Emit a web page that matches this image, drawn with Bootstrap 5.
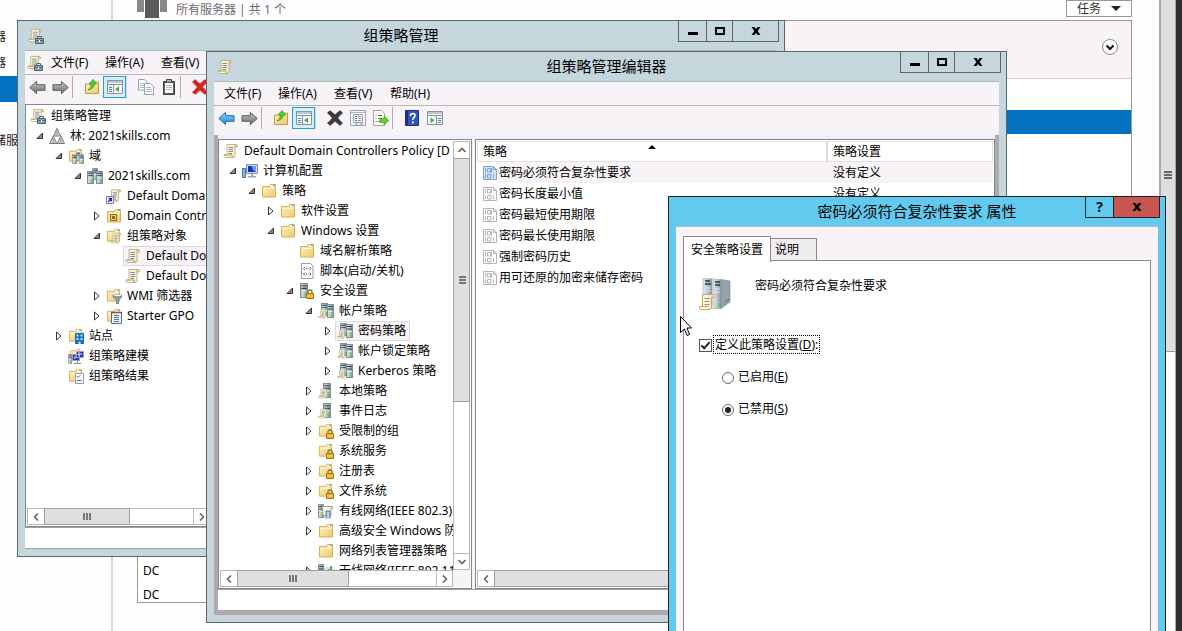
<!DOCTYPE html>
<html lang="zh-CN">
<head>
<meta charset="utf-8">
<meta name="viewport" content="width=device-width, initial-scale=1">
<title>组策略管理编辑器</title>
<link rel="stylesheet" href="https://cdn.jsdelivr.net/npm/bootstrap@5.3.0/dist/css/bootstrap.min.css">
<style>
:root{--edge:#5b6669;--chrome:#c5d6dd;--face:#f7f3f7;--pane:#828790;}
body{font:12px/20px "Noto Sans","Noto Sans CJK SC",sans-serif;color:#000;background:#fffcff}
svg{display:block;flex:none}
button{font:inherit;color:inherit;padding:0;border:0;background:none}
ul{list-style:none;margin:0;padding:0}
.ic{width:16px;height:16px}

/* server manager behind the windows */
.side{width:113px;border-right:2px solid #d8d5d8;padding-top:24px}
.side a{display:block;height:26px;line-height:26px;color:#222;text-decoration:none;margin-left:-6px;padding:0}
.side li.on{background:#0072bf;height:26px}
.side li.last{margin-top:26px}
.board{padding:0 27px 28px 24px}
.board-top{height:20px}
.crumb{gap:9px;color:#6b6b6b}
.tasks{width:66px;height:17px;border:1px solid #999;background:#fff;line-height:15px;color:#333}
.sheet{border:1px solid #999;background:#fff}
.sheet-head{height:58px;background:var(--face);border-bottom:1px solid #ccc;padding-right:13px}
.sheet-head button{margin-top:-6px}
.sheet-on{margin-top:31px;height:24px;background:#0072bf}
.dc-rows{height:43px;line-height:24px;padding-left:5px}
.page-bar{width:17px;border:1px solid #aaa;border-width:0 1px 0 2px;background:#fff}
.page-thumb{height:352px;background:#dfdfdf;border-bottom:1px solid #999}
.strip{width:6px;background:#303030}

/* windows */
.win{border:1px solid var(--edge);background:var(--chrome);position:absolute}
.win-gpm{left:17px;top:20px;width:768px;height:537px}
.win-edit{left:206px;top:51px;width:801px;height:572px}
.win-prop{left:668px;top:196px;width:498px;bottom:-12px;border-color:#222;background:#62caef}
.caption{display:grid;grid-template-columns:1fr auto 1fr;height:29px;flex:none}
.caption h1{font-size:15px;line-height:29px;margin:0;font-weight:400}
.caption .ic{margin-left:10px}
.cap-btns{margin-right:5px}
.cap-btns button{width:29px;height:21px;border:1px solid var(--edge);border-top:0;margin-left:-1px;display:flex;align-items:center;justify-content:center}
.cap-btns .b-max{width:27px}
.cap-btns .b-close{width:47px}
.cap-btns .b-help{font-size:14px;font-weight:700}
.win-prop .cap-btns button{border-color:#222}
.win-prop .b-close{background:#c75650}
.client{margin:0 7px 7px;border-top:1px solid #b0b8c0;background:var(--face);min-height:0}
.menus{height:24px;border-bottom:1px solid #b8b8bc;padding-left:2px}
.menus button{padding:0 8px;line-height:22px;min-width:56px;text-align:left}
.menus button:first-of-type{min-width:54px}
.tools{height:29px;padding:1px 0 0 1px}
.tools button{width:23px;height:22px;display:flex;align-items:center;justify-content:center;border:1px solid transparent}
.tools button.on{border-color:#26a0da;background:#d6ecf8}
.vr-line{width:1px;height:22px;background:#b0acb0;margin-right:7px;flex:none}
.vr-soft{background:#dcd8dc}
.frame{background:#aeaaad;padding:0 4px 5px;min-height:0}
.lilac{height:4px;background:#eeeefc}
.gap-bar{background:var(--face);gap:3px;min-height:0}
.pane{border:1px solid var(--pane);background:#fff;padding:1px;min-width:0;overflow:hidden}
.pane-gpm{width:187px}
.pane-edit{width:254px}
.status{height:22px;background:#fff;border:1px solid #a0a0a0;border-width:1px 0;flex:none}
.frame .status{height:21px;border-bottom:0}

/* trees */
.tree{padding-left:1px;white-space:nowrap}
.tree ul{padding-left:19px}
.tree>li>ul{padding-left:7px}
.tw{width:12px;height:20px;flex:none;display:flex;align-items:center;padding-left:1px}
.node{display:inline-flex;align-items:center;height:20px;gap:5px;padding:0 3px 0 1px;border:1px solid transparent;line-height:18px}
.node.on{background:var(--face);border-color:#dcd8dc}

/* scroll bars */
.sb{flex:none;height:17px;display:flex;border:1px solid #b8b8b8;background:#fff}
.sb button,.sbv button{width:16px;display:flex;align-items:center;justify-content:center;flex:none}
.thumb{background:#dfdfdf;border:1px solid #a0a0a0;margin:-1px 0;display:flex;align-items:center;justify-content:center}
.sb .back{border-left:1px solid #b8b8b8;margin-left:auto}
.sbv{flex:none;width:17px;display:flex;flex-direction:column;border:1px solid #b8b8b8;background:#fff}
.sbv button{width:15px;height:16px}
.sbv .thumb{margin:0 -1px;height:244px}
.sbv .back{border-top:1px solid #b8b8b8;margin-top:auto}
.t-gpm{width:86px}.t-edit{width:112px}
.corner{width:17px;background:var(--face)}

/* policy list */
.grid{width:100%;table-layout:fixed;border-collapse:separate;border-spacing:0;line-height:21px}
.grid th{height:21px;line-height:19px;font-weight:400;padding:0 0 0 5px;border:1px solid #e3e0e3;position:relative}
.grid th+th{border-left-color:#d8d5d8}
.grid td{height:21px;padding:0 0 0 6px}
.c-name{width:350px}
.grid .lbl{padding-left:2px}
.grid tr.on .lbl,.grid tr.on td+td{background:var(--face)}
.reg-ic{width:14px;height:14px;fill:#fff;stroke:#b5b2b8}
.on .reg-ic{fill:#cfe4fa;stroke:#7aa5d4}
.sorter{position:absolute;left:50%;top:3px;margin-left:-4px}

/* properties dialog */
.prop-body{padding:9px 7px 0}
.prop-tabs{height:24px;z-index:1}
.prop-tabs button{border:1px solid #8c8a8e;border-bottom:0;padding:0 7px;height:24px;line-height:22px}
.prop-tabs button.active{background:#fff;height:26px;width:88px}
.prop-tabs .tab-b{background:#f0edf1;width:46px;height:22px;margin-top:2px;border-left:0;padding:0 4px;text-align:left}
.prop-page{border:1px solid #8c8a8e;background:#fff;padding:17px 15px}
.prop-name{gap:24px}
.prop-name span{line-height:16px}
.def-row{margin-top:26px;gap:2px}
.opt-row{margin-left:23px;gap:4px;height:20px}
.opts{margin-top:14px;gap:12px}
.box{appearance:none;width:13px;height:13px;border:1px solid #555;background:#fff;margin:2px 0 0;flex:none;display:grid;place-items:center}
.box:checked::before{content:"";width:9px;height:5px;border:solid #222;border-width:0 0 2px 2px;transform:rotate(-48deg);margin-top:-3px}
.dot{appearance:none;width:12px;height:12px;border:1px solid #666;border-radius:50%;background:#fff;margin:1px 0 0;flex:none;display:grid;place-items:center}
.dot:checked::before{content:"";width:6px;height:6px;border-radius:50%;background:#222}
.focus-lbl{outline:1px dotted #000;outline-offset:0;line-height:17px;padding:0 1px}
.pointer{position:absolute;left:680px;top:316px}
</style>
</head>
<body>
<svg width="0" height="0" class="position-absolute" aria-hidden="true">
<defs>
<linearGradient id="gf" x2="1" y2="1"><stop stop-color="#fff0bd"/><stop offset="1" stop-color="#eecb74"/></linearGradient>
<linearGradient id="gs" x2="1"><stop stop-color="#e8eef2"/><stop offset=".5" stop-color="#b7c6d0"/><stop offset="1" stop-color="#8496a2"/></linearGradient>
<linearGradient id="gg" y2="1" x2="0"><stop stop-color="#c8c8c8"/><stop offset="1" stop-color="#6a6a6a"/></linearGradient>
<linearGradient id="gb" y2="1" x2="0"><stop stop-color="#8fdcff"/><stop offset="1" stop-color="#1583d0"/></linearGradient>
<linearGradient id="gp" x2="1" y2="0"><stop stop-color="#fffdf0"/><stop offset="1" stop-color="#f3e7bd"/></linearGradient>
</defs>
<symbol id="scroll" viewBox="0 0 16 16"><path d="M4 1.500h9.500q1.500.3 1 2.500h-2.500V13q-.3 1.500-2 1.500H2Q.8 14 1.200 12H4z" fill="url(#gp)" stroke="#c0b48c"/><path d="M1.200 12H9q-.3 2 1.500 2.500M12 4q-.3-2 1.500-2.500" fill="none" stroke="#ad9c6c"/><path d="M5.500 4.500h4.500M5.500 6.500h4.500M5.500 8.500h4.500M5.500 10.500h3.500" stroke="#8b8b94"/></symbol>
<symbol id="scrollbox" viewBox="0 0 16 16"><use href="#scroll" width="15" height="15"/><path d="M7.500 10.500h8v5h-8z" fill="#8ba2b5" stroke="#4f6475"/><path d="M9.500 10.500v-2h4v2M7.500 12.500h8" fill="none" stroke="#4f6475"/><path d="M11 12h1v2h-1z" fill="#fff"/></symbol>
<symbol id="folder" viewBox="0 0 16 16"><path d="M1.500 3.500h7l1-2h5v12.500h-13z" fill="url(#gf)" stroke="#d6ae55"/><path d="M10 2h4v2h-4z" fill="#fff"/><path d="M12 2.500h2" stroke="#4a9ad8"/><path d="M2.500 5.500h11" stroke="#fff5cf"/></symbol>
<symbol id="rack" viewBox="0 0 6 14" preserveAspectRatio="none"><path d="M.5.500h5v13h-5z" fill="url(#gs)" stroke="#7f8d97"/><path d="M1 2.500h4M1 5h4" stroke="#2f3b43"/><path d="M1 7.500h4" stroke="#e2e9ee"/><path d="M3.500 10.500h1.500v2h-1.500z" fill="#3fe01e"/></symbol>
<symbol id="servers" viewBox="0 0 16 16"><use href="#rack" x="5" y="0" width="6" height="12"/><use href="#rack" x="0" y="3" width="7" height="13"/><use href="#rack" x="9" y="3" width="7" height="13"/></symbol>
<symbol id="forest" viewBox="0 0 16 16"><g fill="#d8d8d8" stroke="#777" stroke-linejoin="round"><path d="M8 .5 11.500 8h-7zM4.200 8.200 7.800 15.500H.5zM11.800 8.200l3.700 7.300H8.200z"/></g><path d="M8 .5V8M4.200 8.200v7M11.800 8.200v7" stroke="#999"/></symbol>
<symbol id="f-servers" viewBox="0 0 16 16"><use href="#folder" width="15" height="15"/><use href="#servers" x="4" y="4" width="12" height="12"/></symbol>
<symbol id="link" viewBox="0 0 16 16"><use href="#scroll" x="2" width="14" height="15"/><path d="M.5 8.500h7v7h-7z" fill="#fff" stroke="#7a7a9a"/><path d="M2 14l3-3M2.500 10.500h3v3" stroke="#1d2fa5" fill="none" stroke-width="1.300"/></symbol>
<symbol id="ou" viewBox="0 0 16 16"><use href="#folder" width="16" height="16"/><path d="M4.500 6.500h6v6h-6z" fill="#e8cf7a" stroke="#8d6a1a"/><path d="M6 8h3v3H6z" fill="#8d6a1a"/></symbol>
<symbol id="f-scroll" viewBox="0 0 16 16"><use href="#folder" width="15" height="15"/><use href="#scroll" x="4" y="4" width="12" height="12"/></symbol>
<symbol id="f-filter" viewBox="0 0 16 16"><use href="#folder" width="15" height="15"/><path d="M7 7h9v2l-3.500 3V16h-2v-4L7 9z" fill="#7ea0ba" stroke="#587488" stroke-width=".6"/><path d="M8 7.500h7" stroke="#fff"/></symbol>
<symbol id="f-starter" viewBox="0 0 16 16"><use href="#folder" width="15" height="15"/><path d="M5.500 4.500h10v11h-10z" fill="#e9f1f8" stroke="#4d6f90"/><path d="M5 4.500h11" stroke="#9b4c36" stroke-width="1.500"/><path d="M8 7.500h5M8 9.500h5M8 11.500h5M8 13.500h5" stroke="#56779a"/></symbol>
<symbol id="f-site" viewBox="0 0 16 16"><use href="#folder" width="15" height="15"/><path d="M7 5h9v11H7z" fill="#1673b8"/><path d="M8.500 6.500h2v2h-2zM12.500 6.500h2v2h-2zM8.500 10h2v2h-2zM12.500 10h2v2h-2zM10.500 13.500h2V16h-2z" fill="#a9e2fb"/></symbol>
<symbol id="f-model" viewBox="0 0 16 16"><use href="#folder" x="1" width="12" height="12"/><use href="#rack" y="6" width="4" height="10"/><path d="M4.500 6.500h7v6h-7zM8.500 3.500h7v6h-7z" fill="#2636b8" stroke="#9ba5bb"/><path d="M11 4v4M7 8v3M13 5v2" stroke="#fff"/><path d="M6 15.500h7M9.500 13v2" stroke="#888"/></symbol>
<symbol id="f-result" viewBox="0 0 16 16"><use href="#folder" width="15" height="15"/><path d="M7.500 5.500h8v10h-8z" fill="#fff" stroke="#99a"/><path d="m9 8 1.200 1.500L12.500 7M9 12.500h5" fill="none" stroke="#2b83c6"/></symbol>
<symbol id="pc" viewBox="0 0 16 16"><path d="M4.500 1.500h11v9h-11z" fill="#d5dbe4" stroke="#8791a1"/><path d="M6 3h8v6H6z" fill="#1830c8"/><path d="M10 3h4v6q-4-1-4-6z" fill="#6f9cf2"/><path d="M9 11h2v2h3v1.500H6V13h3z" fill="#9aa3ad"/><path d="M.5 5.500h3v9h-3z" fill="#86b4da" stroke="#4a7aa3"/></symbol>
<symbol id="script" viewBox="0 0 16 16"><path d="M2.500.5h9l2.500 2.500v12.500H2.500z" fill="#fff" stroke="#9a9aa2"/><path d="M6 4 4.500 5.500 6 7M10.500 4 12 5.500 10.500 7M6 9.500 4.500 11 6 12.500M10.500 9.500 12 11l-1.500 1.500" fill="none" stroke="#555"/><path d="M7 5.500h2.500M7 11h2.500" stroke="#555" stroke-dasharray="1 1"/></symbol>
<symbol id="lock" viewBox="0 0 8 10"><path d="M2 5V3q0-2 2-2t2 2v2" fill="none" stroke="#8c7030" stroke-width="1.300"/><path d="M.5 4.500h7v5h-7z" fill="#e9ac28" stroke="#a87716"/><path d="M1 7h6" stroke="#ffd76a"/></symbol>
<symbol id="s-lock" viewBox="0 0 16 16"><use href="#rack" x="1" y="0" width="8" height="15"/><use href="#lock" x="7" y="6" width="8" height="10"/></symbol>
<symbol id="f-lock" viewBox="0 0 16 16"><use href="#folder" width="15" height="15"/><use href="#lock" x="8" y="6" width="8" height="10"/></symbol>
<symbol id="s-pol" viewBox="0 0 16 16"><use href="#rack" x="3" y="0" width="7" height="13"/><use href="#rack" x="9" y="1" width="7" height="14"/><use href="#scroll" y="6" width="10" height="10"/></symbol>
<symbol id="s-one" viewBox="0 0 16 16"><use href="#rack" x="5" y="0" width="8" height="15"/><use href="#scroll" y="5" width="11" height="11"/></symbol>
<symbol id="net" viewBox="0 0 16 16"><use href="#rack" x="0" y="1" width="6" height="14"/><path d="M4.500 3.500h10v2h-1.500v7H5z" fill="#fffbe8" stroke="#a89c74"/><path d="M8 15.500V8h4v7.500" fill="#b8cfe6" stroke="#4777a4"/></symbol>
<symbol id="wifi" viewBox="0 0 16 16"><use href="#rack" x="0" y="1" width="6" height="14"/><path d="M6 4h10v11H6z" fill="#dfe6d8"/><path d="M8 10V8M10.500 10V6M13 10V3" stroke="#2b9a35" stroke-width="1.500"/></symbol>
<symbol id="reg" viewBox="0 0 14 14"><path d="M.5.500h10l3 3v10H.500z"/><path d="M10.500.5v3h3M2.500 2v4.500M2.500 8.500V12M10.500 8.500V12" fill="none"/><path d="M4.500 2.500h3v3.500h-3zM8.500 2v4.500M4.500 8.500h3.500v3.500H4.500z" fill="none"/></symbol>
<symbol id="arrow" viewBox="0 0 18 16"><path d="M.8 8 8 1.500V5h9v6H8v3.500z" stroke-linejoin="round"/></symbol>
<symbol id="up" viewBox="0 0 16 16"><path d="M1.500 5h6l1-2h6v11.500h-13z" fill="url(#gf)" stroke="#c79b3d"/><path d="M4 11q3-1 3.500-6H5l4-4.500L12.500 5h-2q-.5 5-6.500 6z" fill="#4bd12e" stroke="#2d9819" stroke-width=".7"/></symbol>
<symbol id="panel" viewBox="0 0 16 16"><path d="M.5 1.500h15v13H.500z" fill="#f7f9fb" stroke="#8593a3"/><path d="M1 3h14M1 5.500h14" stroke="#8593a3"/><path d="M6.500 6v8" stroke="#8593a3"/><path d="M2 8.500h3M2 10.500h3M2 12.500h3" stroke="#4a83bd"/><path d="m12 7.500-4 2.700 4 2.800z" fill="#44a83a"/></symbol>
<symbol id="panel-r" viewBox="0 0 16 16"><path d="M.5 1.500h15v13H.500z" fill="#f7f9fb" stroke="#8593a3"/><path d="M1 3h14M1 5.500h14M9.500 6v8" stroke="#8593a3"/><path d="M11 8.500h3M11 10.500h3M11 12.500h3" stroke="#4a83bd"/><path d="m3.500 7.500 4 2.700-4 2.800z" fill="#44a83a"/></symbol>
<symbol id="copy" viewBox="0 0 16 16"><path d="M.5.500h6l2.500 2.500v8H.500z" fill="#fff" stroke="#98a2ad"/><path d="M6.500 4.500h6l3 3v8h-9z" fill="#fff" stroke="#98a2ad"/><path d="M2 4.500h4M2 6.500h4M2 8.500h4M8 8.500h5M8 10.500h6M8 12.500h6" stroke="#a9bccf"/></symbol>
<symbol id="clip" viewBox="0 0 16 16"><path d="M2.500 2.500h11v13h-11z" fill="#5e5e5e" stroke="#444"/><path d="M4 4h8v10H4z" fill="#fff"/><path d="M5.500.5h5v3h-5z" fill="#aaa" stroke="#444"/><path d="M5 6.500h6M5 8.500h6M5 10.500h6" stroke="#bbb"/></symbol>
<symbol id="cross" viewBox="0 0 16 16"><path d="M0 3 3 .3q2.500 2 5 4.200Q10.500 2 13 .3L16 3q-3 2-5 5 2.500 3 5 5l-3 2.700q-2.500-2-5-4.200-2.500 2.500-5 4.200L0 13q3-2 5-5-2.500-3-5-5z"/></symbol>
<symbol id="props" viewBox="0 0 16 16"><path d="M.5.500h15v15H.500z" fill="#f7fafc" stroke="#98a2ad"/><path d="M1 2.500h14" stroke="#a9b5c1"/><path d="M3.500 4.500h9v8h-9z" fill="#fff" stroke="#98a2ad"/><path d="M5 6.500h2M5 8.500h2M5 10.500h2" stroke="#2e7fc4"/><path d="M8 6.500h3M8 8.500h3M8 10.500h3M5 14h3M10 14h3" stroke="#8593a3"/></symbol>
<symbol id="export" viewBox="0 0 16 16"><path d="M.5.500h8l3 3v12H.500z" fill="#fffef2" stroke="#a9a58c"/><path d="M2.500 5.500h1M2.500 8.500h1M2.500 11.500h1M5 5.500h4M5 8.500h4M5 11.500h3" stroke="#6a6a6a"/><path d="M7 8.500h4V6l5 4.500-5 4.500v-2.500H7z" fill="#5ccc35" stroke="#3b9a1d" stroke-width=".6"/></symbol>
<symbol id="minus" viewBox="0 0 10 10"><path d="M0 6h10v3H0z"/></symbol>
<symbol id="square" viewBox="0 0 10 10"><path d="M1 2h8v6H1z" fill="none" stroke="#000" stroke-width="2"/></symbol>
<symbol id="xx" viewBox="0 0 10 10"><path d="M.5 1h3L5 3.300 6.500 1h3L6.600 5l2.900 4h-3L5 6.700 3.500 9h-3l2.900-4z"/></symbol>
<symbol id="open" viewBox="0 0 8 8"><path d="M6.500 1v5.500H1z" fill="#888" stroke="#333"/></symbol>
<symbol id="shut" viewBox="0 0 8 10"><path d="m1.500 1 4.500 4-4.500 4z" fill="#fff" stroke="#333"/></symbol>
<symbol id="chev" viewBox="0 0 8 8"><path d="M6 .5 2.500 4 6 7.500" fill="none" stroke="#666" stroke-width="1.600"/></symbol>
<symbol id="grip" viewBox="0 0 8 8"><path d="M0 0h2v7H0zM3 0h2v7H3zM6 0h2v7H6z" fill="#777"/></symbol>
</svg>

<div class="position-relative vh-100 overflow-hidden d-flex">
  <nav class="side flex-shrink-0 overflow-hidden" aria-label="服务器管理器">
    <ul>
      <li><a href="#">器</a></li>
      <li><a href="#">器</a></li>
      <li class="on"></li>
      <li class="last"><a href="#">储服</a></li>
    </ul>
  </nav>
  <main class="board flex-fill d-flex flex-column">
    <div class="board-top d-flex justify-content-between">
      <div class="d-flex crumb">
        <svg width="30" height="18"><path d="M0 0h7v12H0zM23 0h7v12h-7z" fill="#8a878a"/><path d="M8 0h14v18H8z" fill="#5c5a5c"/></svg>
        <span>所有服务器 | 共 1 个</span>
      </div>
      <button class="tasks d-flex align-items-center justify-content-evenly" type="button">任务<svg width="10" height="6"><path d="M0 0h10L5 5z" fill="#222"/></svg></button>
    </div>
    <div class="sheet flex-fill d-flex flex-column">
      <div class="sheet-head d-flex justify-content-end align-items-center">
        <button type="button" aria-label="展开"><svg width="16" height="16"><circle cx="8" cy="8" r="7.500" fill="#fff" stroke="#888"/><path d="m4.500 6.500 3.500 3.500 3.500-3.500" fill="none" stroke="#111" stroke-width="2"/></svg></button>
      </div>
      <div class="sheet-on"></div>
      <div class="dc-rows mt-auto overflow-hidden"><div>DC</div><div>DC</div></div>
    </div>
  </main>
  <div class="page-bar flex-shrink-0"><div class="page-thumb d-flex align-items-center justify-content-center"><svg width="8" height="9"><path d="M0 0h8v2H0zM0 3h8v2H0zM0 6h8v2H0z" fill="#666"/></svg></div></div>
  <div class="strip flex-shrink-0"></div>

  <!-- group policy management -->
  <section class="win win-gpm d-flex flex-column" aria-label="组策略管理">
    <header class="caption">
      <svg class="ic align-self-center"><use href="#scrollbox"/></svg>
      <h1>组策略管理</h1>
      <div class="cap-btns d-flex justify-content-end">
        <button type="button" aria-label="最小化"><svg width="10" height="10"><use href="#minus"/></svg></button>
        <button class="b-max" type="button" aria-label="最大化"><svg width="10" height="10"><use href="#square"/></svg></button>
        <button class="b-close" type="button" aria-label="关闭"><svg width="10" height="10"><use href="#xx"/></svg></button>
      </div>
    </header>
    <div class="client flex-fill d-flex flex-column">
      <div class="menus d-flex align-items-center flex-shrink-0">
        <svg class="ic"><use href="#scrollbox"/></svg>
        <button type="button">文件(F)</button><button type="button">操作(A)</button><button type="button">查看(V)</button>
      </div>
      <div class="tools d-flex flex-shrink-0">
        <button type="button" aria-label="后退"><svg width="17" height="15" fill="url(#gg)" stroke="#555"><use href="#arrow"/></svg></button>
        <button type="button" aria-label="前进"><svg width="17" height="15" fill="url(#gg)" stroke="#555"><use href="#arrow" transform="matrix(-1 0 0 1 17 0)"/></svg></button>
        <i class="vr-line"></i>
        <button type="button" aria-label="上移"><svg class="ic"><use href="#up"/></svg></button>
        <button class="on" type="button" aria-label="显示树"><svg class="ic"><use href="#panel"/></svg></button>
        <i class="vr-line vr-soft"></i>
        <button type="button" aria-label="复制"><svg class="ic"><use href="#copy"/></svg></button>
        <button type="button" aria-label="粘贴"><svg class="ic"><use href="#clip"/></svg></button>
        <i class="vr-line"></i>
        <button type="button" aria-label="删除"><svg class="ic" fill="#d8231f"><use href="#cross"/></svg></button>
      </div>
      <div class="gap-bar flex-fill d-flex">
        <div class="pane pane-gpm d-flex flex-column flex-shrink-0">
          <ul class="tree flex-fill overflow-hidden">
            <li><div class="d-flex"><span class="node"><svg class="ic"><use href="#scrollbox"/></svg>组策略管理</span></div>
              <ul>
                <li><div class="d-flex"><span class="tw"><svg width="8" height="8"><use href="#open"/></svg></span><span class="node"><svg class="ic"><use href="#forest"/></svg>林: 2021skills.com</span></div>
                  <ul>
                    <li><div class="d-flex"><span class="tw"><svg width="8" height="8"><use href="#open"/></svg></span><span class="node"><svg class="ic"><use href="#f-servers"/></svg>域</span></div>
                      <ul>
                        <li><div class="d-flex"><span class="tw"><svg width="8" height="8"><use href="#open"/></svg></span><span class="node"><svg class="ic"><use href="#servers"/></svg>2021skills.com</span></div>
                          <ul>
                            <li class="d-flex"><span class="tw"></span><span class="node"><svg class="ic"><use href="#link"/></svg>Default Domain</span></li>
                            <li class="d-flex"><span class="tw"><svg width="8" height="10"><use href="#shut"/></svg></span><span class="node"><svg class="ic"><use href="#ou"/></svg>Domain Controllers</span></li>
                            <li><div class="d-flex"><span class="tw"><svg width="8" height="8"><use href="#open"/></svg></span><span class="node"><svg class="ic"><use href="#f-scroll"/></svg>组策略对象</span></div>
                              <ul>
                                <li class="d-flex"><span class="tw"></span><span class="node on"><svg class="ic"><use href="#scroll"/></svg>Default Domain</span></li>
                                <li class="d-flex"><span class="tw"></span><span class="node"><svg class="ic"><use href="#scroll"/></svg>Default Domain</span></li>
                              </ul></li>
                            <li class="d-flex"><span class="tw"><svg width="8" height="10"><use href="#shut"/></svg></span><span class="node"><svg class="ic"><use href="#f-filter"/></svg>WMI 筛选器</span></li>
                            <li class="d-flex"><span class="tw"><svg width="8" height="10"><use href="#shut"/></svg></span><span class="node"><svg class="ic"><use href="#f-starter"/></svg>Starter GPO</span></li>
                          </ul></li>
                      </ul></li>
                    <li class="d-flex"><span class="tw"><svg width="8" height="10"><use href="#shut"/></svg></span><span class="node"><svg class="ic"><use href="#f-site"/></svg>站点</span></li>
                    <li class="d-flex"><span class="tw"></span><span class="node"><svg class="ic"><use href="#f-model"/></svg>组策略建模</span></li>
                    <li class="d-flex"><span class="tw"></span><span class="node"><svg class="ic"><use href="#f-result"/></svg>组策略结果</span></li>
                  </ul></li>
              </ul></li>
          </ul>
          <div class="sb">
            <button type="button" aria-label="向左"><svg width="8" height="8"><use href="#chev"/></svg></button>
            <div class="thumb t-gpm"><svg width="8" height="8"><use href="#grip"/></svg></div>
            <button class="back" type="button" aria-label="向右"><svg width="8" height="8"><use href="#chev" transform="matrix(-1 0 0 1 8 0)"/></svg></button>
          </div>
        </div>
        <div class="pane flex-fill"></div>
      </div>
      <div class="status"></div>
    </div>
  </section>

  <!-- policy editor -->
  <section class="win win-edit d-flex flex-column" aria-label="组策略管理编辑器">
    <header class="caption">
      <svg class="ic align-self-center"><use href="#scroll"/></svg>
      <h1>组策略管理编辑器</h1>
      <div class="cap-btns d-flex justify-content-end">
        <button type="button" aria-label="最小化"><svg width="10" height="10"><use href="#minus"/></svg></button>
        <button class="b-max" type="button" aria-label="最大化"><svg width="10" height="10"><use href="#square"/></svg></button>
        <button class="b-close" type="button" aria-label="关闭"><svg width="10" height="10"><use href="#xx"/></svg></button>
      </div>
    </header>
    <div class="client flex-fill d-flex flex-column">
      <div class="menus d-flex align-items-center flex-shrink-0">
        <button type="button">文件(F)</button><button type="button">操作(A)</button><button type="button">查看(V)</button><button type="button">帮助(H)</button>
      </div>
      <div class="tools d-flex flex-shrink-0">
        <button type="button" aria-label="后退"><svg width="17" height="15" fill="url(#gb)" stroke="#1668a8"><use href="#arrow"/></svg></button>
        <button type="button" aria-label="前进"><svg width="17" height="15" fill="url(#gg)" stroke="#555"><use href="#arrow" transform="matrix(-1 0 0 1 17 0)"/></svg></button>
        <i class="vr-line"></i>
        <button type="button" aria-label="上移"><svg class="ic"><use href="#up"/></svg></button>
        <button class="on" type="button" aria-label="显示树"><svg class="ic"><use href="#panel"/></svg></button>
        <i class="vr-line vr-soft"></i>
        <button type="button" aria-label="删除"><svg class="ic" fill="#3c3c3c"><use href="#cross"/></svg></button>
        <button type="button" aria-label="属性"><svg class="ic"><use href="#props"/></svg></button>
        <button type="button" aria-label="导出列表"><svg class="ic"><use href="#export"/></svg></button>
        <i class="vr-line"></i>
        <button type="button" aria-label="帮助"><svg width="14" height="16"><path d="M.5.500h13v15H.500z" fill="#2f55c4" stroke="#1c2f7c"/><path d="M1 1h2v14H1z" fill="#1c2f7c"/><path d="M5.500 6q0-2.500 2.300-2.500T10 5.700Q10 7 8.500 7.800 7.800 8.300 7.800 10M7.800 11.500v2" fill="none" stroke="#fff" stroke-width="1.600"/></svg></button>
        <button type="button" aria-label="操作窗格"><svg class="ic"><use href="#panel-r"/></svg></button>
      </div>
      <div class="frame flex-fill d-flex flex-column">
        <div class="lilac flex-shrink-0"></div>
        <div class="gap-bar flex-fill d-flex">
          <div class="pane pane-edit d-flex flex-column flex-shrink-0">
            <div class="d-flex flex-fill overflow-hidden">
              <ul class="tree flex-fill overflow-hidden">
                <li><div class="d-flex"><span class="node"><svg class="ic"><use href="#scroll"/></svg>Default Domain Controllers Policy [D</span></div>
                  <ul>
                    <li><div class="d-flex"><span class="tw"><svg width="8" height="8"><use href="#open"/></svg></span><span class="node"><svg class="ic"><use href="#pc"/></svg>计算机配置</span></div>
                      <ul>
                        <li><div class="d-flex"><span class="tw"><svg width="8" height="8"><use href="#open"/></svg></span><span class="node"><svg class="ic"><use href="#folder"/></svg>策略</span></div>
                          <ul>
                            <li class="d-flex"><span class="tw"><svg width="8" height="10"><use href="#shut"/></svg></span><span class="node"><svg class="ic"><use href="#folder"/></svg>软件设置</span></li>
                            <li><div class="d-flex"><span class="tw"><svg width="8" height="8"><use href="#open"/></svg></span><span class="node"><svg class="ic"><use href="#folder"/></svg>Windows 设置</span></div>
                              <ul>
                                <li class="d-flex"><span class="tw"></span><span class="node"><svg class="ic"><use href="#folder"/></svg>域名解析策略</span></li>
                                <li class="d-flex"><span class="tw"></span><span class="node"><svg class="ic"><use href="#script"/></svg>脚本(启动/关机)</span></li>
                                <li><div class="d-flex"><span class="tw"><svg width="8" height="8"><use href="#open"/></svg></span><span class="node"><svg class="ic"><use href="#s-lock"/></svg>安全设置</span></div>
                                  <ul>
                                    <li><div class="d-flex"><span class="tw"><svg width="8" height="8"><use href="#open"/></svg></span><span class="node"><svg class="ic"><use href="#s-pol"/></svg>帐户策略</span></div>
                                      <ul>
                                        <li class="d-flex"><span class="tw"><svg width="8" height="10"><use href="#shut"/></svg></span><span class="node on"><svg class="ic"><use href="#s-pol"/></svg>密码策略</span></li>
                                        <li class="d-flex"><span class="tw"><svg width="8" height="10"><use href="#shut"/></svg></span><span class="node"><svg class="ic"><use href="#s-pol"/></svg>帐户锁定策略</span></li>
                                        <li class="d-flex"><span class="tw"><svg width="8" height="10"><use href="#shut"/></svg></span><span class="node"><svg class="ic"><use href="#s-pol"/></svg>Kerberos 策略</span></li>
                                      </ul></li>
                                    <li class="d-flex"><span class="tw"><svg width="8" height="10"><use href="#shut"/></svg></span><span class="node"><svg class="ic"><use href="#s-one"/></svg>本地策略</span></li>
                                    <li class="d-flex"><span class="tw"><svg width="8" height="10"><use href="#shut"/></svg></span><span class="node"><svg class="ic"><use href="#s-one"/></svg>事件日志</span></li>
                                    <li class="d-flex"><span class="tw"><svg width="8" height="10"><use href="#shut"/></svg></span><span class="node"><svg class="ic"><use href="#f-lock"/></svg>受限制的组</span></li>
                                    <li class="d-flex"><span class="tw"></span><span class="node"><svg class="ic"><use href="#f-lock"/></svg>系统服务</span></li>
                                    <li class="d-flex"><span class="tw"><svg width="8" height="10"><use href="#shut"/></svg></span><span class="node"><svg class="ic"><use href="#f-lock"/></svg>注册表</span></li>
                                    <li class="d-flex"><span class="tw"><svg width="8" height="10"><use href="#shut"/></svg></span><span class="node"><svg class="ic"><use href="#f-lock"/></svg>文件系统</span></li>
                                    <li class="d-flex"><span class="tw"><svg width="8" height="10"><use href="#shut"/></svg></span><span class="node"><svg class="ic"><use href="#net"/></svg>有线网络(IEEE 802.3)</span></li>
                                    <li class="d-flex"><span class="tw"><svg width="8" height="10"><use href="#shut"/></svg></span><span class="node"><svg class="ic"><use href="#folder"/></svg>高级安全 Windows 防</span></li>
                                    <li class="d-flex"><span class="tw"></span><span class="node"><svg class="ic"><use href="#folder"/></svg>网络列表管理器策略</span></li>
                                    <li class="d-flex"><span class="tw"><svg width="8" height="10"><use href="#shut"/></svg></span><span class="node"><svg class="ic"><use href="#wifi"/></svg>无线网络(IEEE 802.11</span></li>
                                  </ul></li>
                              </ul></li>
                          </ul></li>
                      </ul></li>
                  </ul></li>
              </ul>
              <div class="sbv">
                <button type="button" aria-label="向上"><svg width="8" height="8"><use href="#chev" transform="rotate(90 4 4)"/></svg></button>
                <div class="thumb"><svg width="8" height="8"><use href="#grip" transform="rotate(90 4 4)"/></svg></div>
                <button class="back" type="button" aria-label="向下"><svg width="8" height="8"><use href="#chev" transform="rotate(-90 4 4)"/></svg></button>
              </div>
            </div>
            <div class="d-flex flex-shrink-0">
              <div class="sb flex-fill">
                <button type="button" aria-label="向左"><svg width="8" height="8"><use href="#chev"/></svg></button>
                <div class="thumb t-edit"><svg width="8" height="8"><use href="#grip"/></svg></div>
                <button class="back" type="button" aria-label="向右"><svg width="8" height="8"><use href="#chev" transform="matrix(-1 0 0 1 8 0)"/></svg></button>
              </div>
              <div class="corner"></div>
            </div>
          </div>
          <div class="pane flex-fill d-flex flex-column">
            <table class="grid">
              <thead><tr><th class="c-name">策略<svg class="sorter" width="8" height="5"><path d="M0 4h8L4 0z"/></svg></th><th>策略设置</th></tr></thead>
              <tbody>
                <tr class="on"><td><div class="d-flex align-items-center"><svg class="reg-ic"><use href="#reg"/></svg><span class="lbl flex-fill">密码必须符合复杂性要求</span></div></td><td>没有定义</td></tr>
                <tr><td><div class="d-flex align-items-center"><svg class="reg-ic"><use href="#reg"/></svg><span class="lbl">密码长度最小值</span></div></td><td>没有定义</td></tr>
                <tr><td><div class="d-flex align-items-center"><svg class="reg-ic"><use href="#reg"/></svg><span class="lbl">密码最短使用期限</span></div></td><td></td></tr>
                <tr><td><div class="d-flex align-items-center"><svg class="reg-ic"><use href="#reg"/></svg><span class="lbl">密码最长使用期限</span></div></td><td></td></tr>
                <tr><td><div class="d-flex align-items-center"><svg class="reg-ic"><use href="#reg"/></svg><span class="lbl">强制密码历史</span></div></td><td></td></tr>
                <tr><td><div class="d-flex align-items-center"><svg class="reg-ic"><use href="#reg"/></svg><span class="lbl">用可还原的加密来储存密码</span></div></td><td></td></tr>
              </tbody>
            </table>
            <div class="sb mt-auto">
              <button type="button" aria-label="向左"><svg width="8" height="8"><use href="#chev"/></svg></button>
              <div class="thumb flex-fill"></div>
              <button class="back" type="button" aria-label="向右"><svg width="8" height="8"><use href="#chev" transform="matrix(-1 0 0 1 8 0)"/></svg></button>
            </div>
          </div>
        </div>
        <div class="status"></div>
      </div>
    </div>
  </section>

  <!-- setting properties -->
  <section class="win win-prop d-flex flex-column" role="dialog" aria-label="密码必须符合复杂性要求 属性">
    <header class="caption">
      <span></span>
      <h1>密码必须符合复杂性要求 属性</h1>
      <div class="cap-btns d-flex justify-content-end">
        <button class="b-help" type="button">?</button>
        <button class="b-close" type="button" aria-label="关闭"><svg width="10" height="10"><use href="#xx"/></svg></button>
      </div>
    </header>
    <div class="client prop-body flex-fill d-flex flex-column">
      <div class="prop-tabs d-flex position-relative" role="tablist">
        <button class="active" type="button" role="tab" aria-selected="true">安全策略设置</button>
        <button class="tab-b" type="button" role="tab" aria-selected="false">说明</button>
      </div>
      <div class="prop-page flex-fill">
        <div class="d-flex prop-name">
          <svg width="32" height="32" viewBox="0 0 32 32"><path d="M4 .5h9v26H4z" fill="url(#gs)" stroke="#9aa5ac" stroke-width=".6"/><path d="M4 .5 7 0h9l-2 1z" fill="#c9d2d8"/><path d="M14 1.500h8v29h-8z" fill="url(#gs)" stroke="#9aa5ac" stroke-width=".6"/><path d="M22 1.500l9 1.500v21l-9 6.500z" fill="#94a1a9" stroke="#7c8990" stroke-width=".6"/><path d="M6 3h5M6 6h6M16 4h5M16 7h5" stroke="#2e3a42" stroke-width="1.500"/><path d="M5 10h7M15 11h6M5 13h7M15 14h6" stroke="#dde4e9"/><path d="M20 26h2v3h-2z" fill="#2fdc1c"/><path d="M26 24l4-3" stroke="#53616a"/><g transform="translate(0 16)"><path d="M3.500.5H15v3h-2.500V13q0 2.500-2.500 2.500H1.500Q-.5 14 1 12.500h2.500z" fill="url(#gp)" stroke="#c9a663"/><path d="M5.500 4.500h5M5.500 7.500h5M5.500 10.500h5" stroke="#8b8b94"/><path d="M1 12.500h8.500" stroke="#c9a663"/></g></svg>
          <span>密码必须符合复杂性要求</span>
        </div>
        <div class="d-flex align-items-center def-row">
          <input class="box" type="checkbox" id="def" checked><label class="focus-lbl" for="def">定义此策略设置(<u>D</u>):</label>
        </div>
        <div class="d-flex flex-column opts">
          <div class="d-flex align-items-center opt-row"><input class="dot" type="radio" name="st" id="en"><label for="en">已启用(<u>E</u>)</label></div>
          <div class="d-flex align-items-center opt-row"><input class="dot" type="radio" name="st" id="dis" checked><label for="dis">已禁用(<u>S</u>)</label></div>
        </div>
      </div>
    </div>
  </section>

  <svg class="pointer" width="12" height="21" aria-hidden="true"><path d="M.5.500v16l4-3.500 2.500 6.500 2.500-1L7 12h4.500z" fill="#fff" stroke="#000"/></svg>
</div>
<script src="https://cdn.jsdelivr.net/npm/bootstrap@5.3.0/dist/js/bootstrap.bundle.min.js"></script>
</body>
</html>
